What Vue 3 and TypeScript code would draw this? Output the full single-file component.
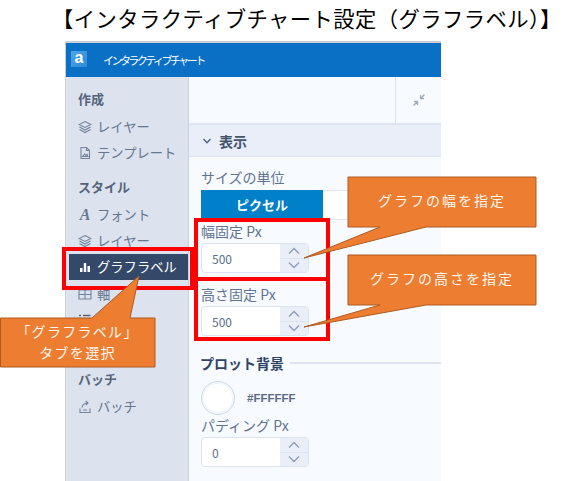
<script setup lang="ts">
const fields = [
  { label: '幅固定 Px', value: '500' },
  { label: '高さ固定 Px', value: '500' },
]
</script>

<template>
  <div class="page">
    <h1 class="title">【インタラクティブチャート設定（グラフラベル）】</h1>

    <div class="window">
      <header class="bar">
        <span class="logo">a</span>
        <span class="bar-title">インタラクティブチャート</span>
      </header>

      <div class="body">
        <nav class="side">
          <div class="group">作成</div>
          <div class="item">
            <svg class="ic" viewBox="0 0 14 14"><path d="M7 1.500 13 4.500 7 7.500 1 4.500ZM1.500 7 7 10 12.500 7M1.500 9.500 7 12.500 12.500 9.500" /></svg>
            レイヤー
          </div>
          <div class="item">
            <svg class="ic" viewBox="0 0 14 14"><path d="M3 1.500H8.500L11.500 4.500V12.500H3ZM8.500 1.500V4.500H11.500M4.500 10.500 6.500 8 8 9.500 9 8.500 10 10.500Z" /></svg>
            テンプレート
          </div>
          <div class="group gap">スタイル</div>
          <div class="item">
            <span class="ic-a">A</span>
            フォント
          </div>
          <div class="item">
            <svg class="ic" viewBox="0 0 14 14"><path d="M7 1.500 13 4.500 7 7.500 1 4.500ZM1.500 7 7 10 12.500 7M1.500 9.500 7 12.500 12.500 9.500" /></svg>
            レイヤー
          </div>
          <div class="item active">
            <svg class="ic" viewBox="0 0 14 14"><path class="solid" d="M2 8H4.500V12H2ZM5.800 3H8.200V12H5.800ZM9.500 6H12V12H9.500Z" /></svg>
            グラフラベル
          </div>
          <div class="item">
            <svg class="ic" viewBox="0 0 14 14"><path d="M1 3H13V12H1ZM1 7.500H13M7 3V12" /></svg>
            軸
          </div>
          <div class="item">
            <svg class="ic dark" viewBox="0 0 14 14"><path d="M5 2.500H12.500M1 2.500H3M5 8H12.500M1 8H3" /></svg>
          </div>
          <div class="group batch">バッチ</div>
          <div class="item">
            <svg class="ic" viewBox="0 0 14 14"><path d="M2 8.500V12.500H12V8.500M4 7.500C4.500 4.500 6.500 3 10 3M7.800 1 10 3 7.800 5M5 10H9" /></svg>
            バッチ
          </div>
        </nav>

        <main class="main">
          <div class="tools">
            <div class="tool">
              <svg viewBox="0 0 14 14" class="compress"><path d="M12.500 1.500 8.500 5.500M8.500 2V5.500H12M1.500 12.500 5.500 8.500M2 8.500H5.500V12" /></svg>
            </div>
          </div>
          <div class="section-head">
            <svg viewBox="0 0 10 10" class="chev"><path d="M1.500 3 5 6.800 8.500 3" /></svg>
            <span>表示</span>
          </div>
          <div class="content">
            <div class="label">サイズの単位</div>
            <div class="segment">
              <span class="seg-on">ピクセル</span>
              <span class="seg-off"></span>
            </div>

            <div v-for="f in fields" :key="f.label" class="field">
              <div class="label">{{ f.label }}</div>
              <div class="stepper">
                <span class="value">{{ f.value }}</span>
                <div class="arrows">
                  <span class="arrow"><svg viewBox="0 0 14 8"><path d="M2 6.500 7 1.500 12 6.500" /></svg></span>
                  <span class="arrow"><svg viewBox="0 0 14 8"><path d="M2 1.500 7 6.500 12 1.500" /></svg></span>
                </div>
              </div>
            </div>

            <div class="plot-head">
              <span>プロット背景</span>
              <i></i>
            </div>
            <div class="color">
              <span class="swatch"></span>
              <span class="hex">#FFFFFF</span>
            </div>
            <div class="label pad-label">パディング Px</div>
            <div class="stepper">
              <span class="value">0</span>
              <div class="arrows">
                <span class="arrow"><svg viewBox="0 0 14 8"><path d="M2 6.500 7 1.500 12 6.500" /></svg></span>
                <span class="arrow"><svg viewBox="0 0 14 8"><path d="M2 1.500 7 6.500 12 1.500" /></svg></span>
              </div>
            </div>
          </div>
        </main>
      </div>
    </div>

    <!-- annotations lying over the screenshot -->
    <span class="red r1"></span>
    <span class="red r2"></span>
    <span class="red r3"></span>

    <svg class="pointers" viewBox="0 0 580 481">
      <path d="M348 177H536V227H426L304 258 380 227H348Z" />
      <path d="M348 255H536V305H426L304 327 380 305H348Z" />
      <path d="M.5 318H92L139 276 130 318H155V367H.5Z" />
    </svg>

    <div class="note n1">グラフの幅を指定</div>
    <div class="note n2">グラフの高さを指定</div>
    <div class="note n3">「グラフラベル」<br />タブを選択</div>
  </div>
</template>

<style>
html, body { margin: 0; background: #fff; }
</style>

<style scoped>
.page {
  position: relative;
  width: 580px;
  height: 481px;
  overflow: hidden;
  background: #fff;
  font-family: "Noto Sans CJK JP", "Noto Sans", sans-serif;
}
.title {
  margin: 0;
  height: 41px;
  box-sizing: border-box;
  padding: 4px 0 0 52px;
  font-size: 21.300px;
  line-height: 28px;
  font-weight: 400;
  letter-spacing: .45px;
  color: #000;
  white-space: nowrap;
}
.window {
  width: 376px;
  height: 440px;
  margin-left: 65px;
  box-sizing: border-box;
  border-top: 2px solid #ccd0d6;
  border-left: 1px solid #ccd0d6;
  display: flex;
  flex-direction: column;
}
.bar {
  height: 34px;
  flex: none;
  background: #0a70c5;
  display: flex;
  align-items: center;
  color: #fff;
}
.logo {
  width: 16px;
  height: 16px;
  margin: -3px 0 0 5px;
  background: linear-gradient(135deg, #4fa6e6, #2f8ad6);
  font: 700 16px/13px "Liberation Sans", sans-serif;
  text-align: center;
}
.bar-title {
  margin-left: 16px;
  font-size: 11px;
  letter-spacing: -2.550px;
}
.body {
  flex: 1;
  display: flex;
  min-height: 0;
}
.side {
  width: 123px;
  flex: none;
  box-sizing: border-box;
  padding-top: 9px;
  background: #dce3ef;
  border-left: 1px solid #e4e7ec;
  border-right: 1px solid #c6d3e3;
  color: #66768f;
  font-size: 13.300px;
}
.group {
  height: 26px;
  line-height: 26px;
  padding-left: 11px;
  font-size: 13px;
  font-weight: 700;
  color: #56647c;
  margin-bottom: 2px;
}
.group.gap { margin-top: 8px; }
.group.batch { margin-top: 33px; }
.item {
  height: 26px;
  display: flex;
  align-items: center;
  gap: 5px;
  padding-left: 11px;
  line-height: 26px;
  white-space: nowrap;
}
.ic {
  width: 14px;
  height: 14px;
  flex: none;
  fill: none;
  stroke: #74839b;
  stroke-width: 1.100;
}
.ic.dark { stroke: #56647c; stroke-width: 1.400; }
.ic-a {
  width: 14px;
  flex: none;
  font: italic 700 16px/26px "Liberation Serif", serif;
  text-align: center;
  color: #677892;
}
.item.active {
  margin-left: 2px;
  padding-left: 9px;
  background: #34496a;
  color: #fff;
  margin-bottom: 1px;
}
.item.active .solid { fill: #fff; stroke: none; }
.main {
  flex: 1;
  min-width: 0;
  background: #f7faff;
}
.tools {
  height: 48px;
  display: flex;
  justify-content: flex-end;
  box-sizing: border-box;
  border-bottom: 2px solid #dee5f1;
}
.tool {
  width: 45px;
  border-left: 1px solid #dee5f1;
  display: flex;
  align-items: center;
  justify-content: center;
}
.compress {
  width: 14px;
  height: 14px;
  fill: none;
  stroke: #9fabc0;
  stroke-width: 1.300;
}
.section-head {
  height: 32px;
  box-sizing: border-box;
  padding-left: 13px;
  display: flex;
  align-items: center;
  gap: 7px;
  background: #e9eef8;
  border-bottom: 1px solid #dfe5f1;
  font-size: 14px;
  font-weight: 700;
  color: #44546e;
}
.chev {
  width: 10px;
  height: 10px;
  fill: none;
  stroke: #4f5f78;
  stroke-width: 1.300;
}
.content { padding: 10px 0 0 12px; }
.label {
  height: 20px;
  line-height: 20px;
  font-size: 14px;
  color: #627390;
  white-space: nowrap;
}
.segment {
  display: flex;
  height: 30px;
  margin: 3px 0 1px;
}
.seg-on {
  width: 122px;
  flex: none;
  background: #0080c8;
  color: #fff;
  font-size: 13px;
  font-weight: 700;
  line-height: 30px;
  text-align: center;
}
.seg-off {
  flex: 1;
  background: #fff;
  border-top: 1px solid #dfe6f2;
  border-bottom: 1px solid #dfe6f2;
}
.field { height: 63px; }
.stepper {
  width: 108px;
  height: 30px;
  margin-top: 2px;
  box-sizing: border-box;
  border: 1px solid #dce4f1;
  border-radius: 4px;
  background: #fff;
  display: flex;
  overflow: hidden;
}
.value {
  flex: 1;
  padding-left: 10px;
  font-size: 12px;
  line-height: 30px;
  color: #5c6d88;
}
.arrows {
  width: 28px;
  flex: none;
  display: flex;
  flex-direction: column;
  background: #e9eef8;
}
.arrow {
  flex: 1;
  display: flex;
  align-items: center;
  justify-content: center;
}
.arrow + .arrow { border-top: 1px solid #dce4f1; }
.arrow svg {
  width: 14px;
  height: 8px;
  fill: none;
  stroke: #8d9cba;
  stroke-width: 1.300;
}
.plot-head {
  display: flex;
  align-items: center;
  gap: 6px;
  height: 20px;
  margin-top: 6px;
  font-size: 14px;
  font-weight: 700;
  color: #2f4468;
}
.plot-head span { margin-left: -1px; }
.plot-head i {
  flex: 1;
  height: 2px;
  background: #dee5f1;
}
.color {
  display: flex;
  align-items: center;
  gap: 12px;
  margin-top: 8px;
}
.swatch {
  width: 34px;
  height: 34px;
  box-sizing: border-box;
  border: 1px solid #ced8e7;
  border-radius: 50%;
  background: #fff;
  box-shadow: inset 0 0 0 2px #f2f6fc;
}
.hex {
  font: 700 11.500px "Liberation Sans", sans-serif;
  color: #5c6b84;
}
.pad-label { margin-bottom: 2px; }

.red {
  position: absolute;
  box-sizing: border-box;
  border: 4px solid #ff0000;
}
.r1 { left: 194px; top: 218px; width: 136px; height: 63px; }
.r2 { left: 194px; top: 277px; width: 136px; height: 64px; }
.r3 { left: 62px; top: 247px; width: 132px; height: 43px; }

.pointers {
  position: absolute;
  inset: 0;
  width: 580px;
  height: 481px;
  fill: #ed7d31;
  stroke: #ae5a21;
  stroke-width: 1;
}
.note {
  position: absolute;
  color: #fff6ee;
  font-size: 14px;
  letter-spacing: 2px;
  text-align: center;
  white-space: nowrap;
}
.n1 { left: 348px; top: 188px; width: 188px; line-height: 24px; }
.n2 { left: 348px; top: 266px; width: 188px; line-height: 24px; }
.n3 { left: 0; top: 321px; width: 155px; line-height: 21px; letter-spacing: 1.300px; }
</style>
